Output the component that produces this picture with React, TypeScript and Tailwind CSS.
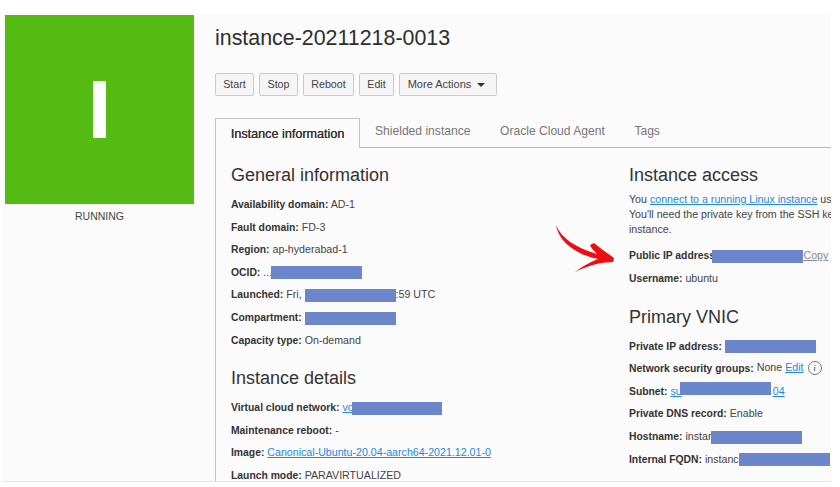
import React from "react";

const Blue = ({ w, ml = 0 }: { w: number; ml?: number }) => (
  <span
    className="relative inline-block h-[13px] bg-[#6c86cc] align-middle"
    style={{ width: w, marginLeft: ml }}
  />
);

const Row = ({ label, children }: { label: string; children?: React.ReactNode }) => (
  <div className="h-[22.6px] leading-[22.6px] whitespace-nowrap text-[10.65px] text-[#444444]">
    <b className="font-bold text-[10.35px] text-[#333333]">{label}</b> {children}
  </div>
);

const Link = ({ children }: { children: React.ReactNode }) => (
  <span className="text-[#1f87e0] underline">{children}</span>
);

const H = ({ children, cls }: { children: React.ReactNode; cls: string }) => (
  <h2 className={`text-[18px] leading-[22px] text-[#333333] whitespace-nowrap ${cls}`}>{children}</h2>
);

const Btn = ({ children, w }: { children: React.ReactNode; w: string }) => (
  <button className={`${w} h-[23px] flex items-center justify-center gap-[6px] rounded-[2px] border border-[#c9c9cf] bg-[#f5f5f5] text-[10.7px] text-[#444444]`}>
    {children}
  </button>
);

export default function App() {
  return (
    <div className="relative w-[840px] h-[487px] bg-white overflow-hidden font-['Liberation_Sans',Arial,sans-serif]">
      <div className="mt-[13px] ml-[2px] w-[829px] h-[469px] bg-[#fbfbfb] flex overflow-hidden border-b border-[#e4e4e4]">
        {/* Status tile */}
        <div className="w-[213px] shrink-0 pl-[3px] pt-[2px]">
          <div className="w-[189px] h-[189px] bg-[#54bb13] flex items-center justify-center">
            <div className="w-[13px] h-[57px] bg-white" />
          </div>
          <div className="w-[189px] mt-[6px] text-center text-[10.5px] leading-[13px] text-[#444444]">RUNNING</div>
        </div>

        {/* Main */}
        <div className="flex-1 min-w-0 pt-[12px] flex flex-col">
          <h1 className="text-[21.4px] leading-[26px] text-[#2e2e2e] whitespace-nowrap">instance-20211218-0013</h1>
          <div className="flex gap-[5px] mt-[22px]">
            <Btn w="w-[39px]">Start</Btn>
            <Btn w="w-[39px]">Stop</Btn>
            <Btn w="w-[51px]">Reboot</Btn>
            <Btn w="w-[35px]">Edit</Btn>
            <Btn w="w-[98px] pr-[3px]">
              <span className="text-[11px]">More Actions</span>
              <span className="w-0 h-0 border-x-[4.5px] border-x-transparent border-t-[4px] border-t-[#333333]" />
            </Btn>
          </div>

          {/* Tabs */}
          <div className="flex mt-[22px] h-[30px] border-b border-[#b9b9b9] text-[12.1px]">
            <div className="w-[145px] h-[30px] pt-[1px] bg-[#fbfbfb] border border-b-0 border-[#c4c4c4] flex items-center justify-center text-[12.6px] text-[#333333] [text-shadow:0.2px_0_0_#333333]">
              Instance information
            </div>
            <div className="flex items-center pl-[15px] gap-[29.5px] text-[#777777] pb-[2px]">
              <span>Shielded instance</span>
              <span>Oracle Cloud Agent</span>
              <span>Tags</span>
            </div>
          </div>

          {/* Panel */}
          <div className="flex-1 min-h-0 border-l border-[#c4c4c4] pl-[15px] flex">
            <div className="w-[398px] shrink-0 pt-[16px]">
              <H cls="">General information</H>
              <div className="mt-[7px]">
                <Row label="Availability domain:">AD-1</Row>
                <Row label="Fault domain:">FD-3</Row>
                <Row label="Region:">ap-hyderabad-1</Row>
                <Row label="OCID:">...<Blue w={91} ml={-1} /></Row>
                <Row label="Launched:">Fri, <Blue w={91} />:59 UTC</Row>
                <Row label="Compartment:"><Blue w={91} /></Row>
                <Row label="Capacity type:">On-demand</Row>
              </div>
              <H cls="mt-[16px]">Instance details</H>
              <div className="mt-[7px]">
                <Row label="Virtual cloud network:"><Link>vc</Link><Blue w={90} ml={-1} /></Row>
                <Row label="Maintenance reboot:">-</Row>
                <Row label="Image:"><Link>Canonical-Ubuntu-20.04-aarch64-2021.12.01-0</Link></Row>
                <Row label="Launch mode:">PARAVIRTUALIZED</Row>
              </div>
            </div>

            <div className="flex-1 min-w-0 overflow-hidden pt-[16px]">
              <H cls="">Instance access</H>
              <div className="mt-[6px] text-[10.65px] leading-[15px] text-[#444444] whitespace-nowrap">
                <div>You <Link>connect to a running Linux instance</Link> us</div>
                <div>You'll need the private key from the SSH ke</div>
                <div>instance.</div>
              </div>
              <div className="mt-[8px]">
                <div className="h-[22px] whitespace-nowrap text-[10.65px] flex items-center">
                  <b className="font-bold text-[10.35px] text-[#333333]">Public IP address:</b>
                  <span className="ml-[-7px] flex items-center"><Blue w={91} /></span>
                  <span className="ml-[1px] text-[#8a8a8a] underline">Copy</span>
                </div>
                <Row label="Username:">ubuntu</Row>
              </div>
              <H cls="mt-[16px]">Primary VNIC</H>
              <div className="mt-[7px]">
                <Row label="Private IP address:"><Blue w={91} /></Row>
                <div className="h-[22.6px] whitespace-nowrap text-[10.65px] text-[#444444] flex items-center gap-[3px]">
                  <b className="font-bold text-[10.35px] text-[#333333]">Network security groups:</b>
                  <span>None</span>
                  <Link>Edit</Link>
                  <span className="ml-[1px] w-[14px] h-[14px] rounded-full border border-[#777777] flex items-center justify-center text-[9px] italic font-['Liberation_Serif',serif] leading-none text-[#444444]">i</span>
                </div>
                <Row label="Subnet:"><span className="relative inline-block"><Link>su<span className="inline-block w-[91px] h-[1px]" />04</Link><span className="absolute left-[10px] top-[2px] w-[91px] h-[13px] bg-[#6c86cc]" /></span></Row>
                <Row label="Private DNS record:">Enable</Row>
                <Row label="Hostname:">instar<Blue w={91} /></Row>
                <Row label="Internal FQDN:">instanc<Blue w={91} /></Row>
              </div>
            </div>
          </div>
        </div>
      </div>

      {/* Annotation arrow */}
      <svg className="absolute left-[550px] top-[220px]" width="70" height="56" viewBox="550 220 70 56">
        <path
          d="M556 225 C561 238 576 248 597 254 C594 251 591 248 590 245 L594 243 C600 248 607 253 614 258 L613 262 C600 262 587 266 575 272 C583 266 590 262 598 259 C578 255 559 243 556 225 Z"
          fill="#ee0d13"
        />
      </svg>
    </div>
  );
}
